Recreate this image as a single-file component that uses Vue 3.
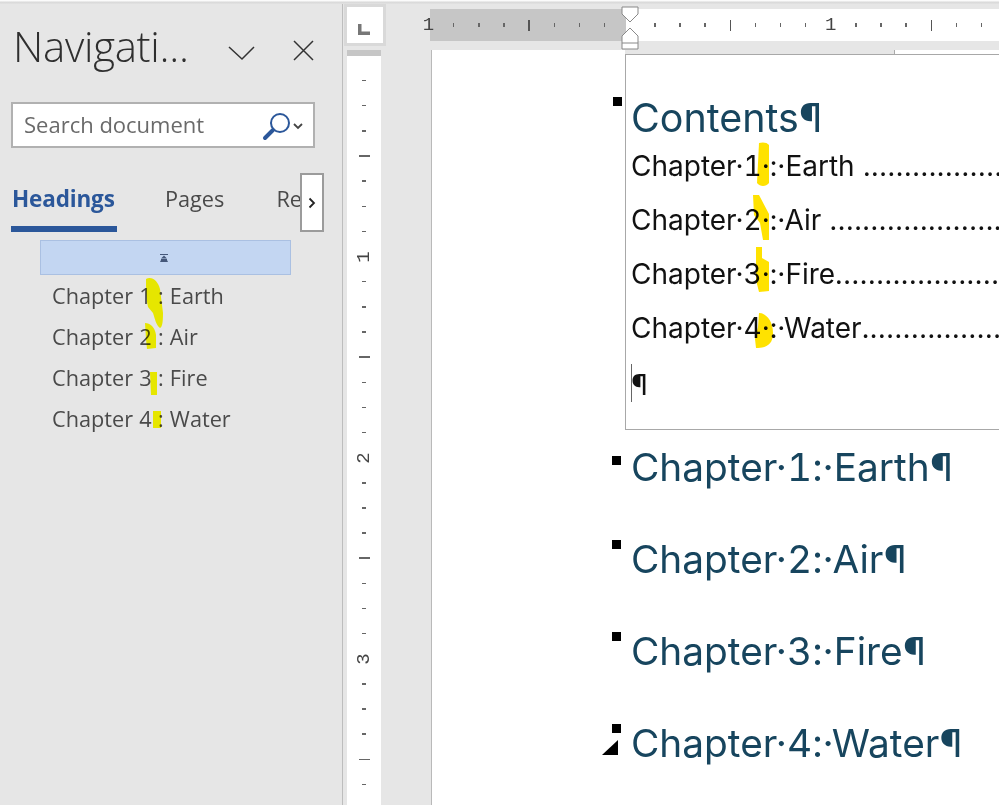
<script setup>
const hTicks = [
  { label: '1', light: true }, { s: 1 }, { s: 1 }, { s: 1 }, { t: 1 }, { s: 1 }, { s: 1 }, { s: 1 }, { gap: 1 },
  { s: 1 }, { s: 1 }, { s: 1 }, { t: 1 }, { s: 1 }, { s: 1 }, { s: 1 }, { label: '1' },
  { s: 1 }, { s: 1 }, { s: 1 }, { t: 1 }, { s: 1 }, { s: 1 }, { s: 1 }
]
const vTicks = []
for (let i = 0; i < 30; i++) {
  if (i % 8 === 7) vTicks.push({ label: String((i + 1) / 8) })
  else if (i % 8 === 3) vTicks.push({ t: 1 })
  else vTicks.push({ s: 1 })
}
const nav = ['Chapter 1 : Earth', 'Chapter 2 : Air', 'Chapter 3 : Fire', 'Chapter 4 : Water']
const toc = [
  { text: 'Chapter·1·:·Earth', lead: ' ' },
  { text: 'Chapter·2·:·Air', lead: ' ' },
  { text: 'Chapter·3·:·Fire', lead: '' },
  { text: 'Chapter·4·:·Water', lead: '' }
]
const heads = ['Chapter·1:·Earth¶', 'Chapter·2:·Air¶', 'Chapter·3:·Fire¶', 'Chapter·4:·Water¶']
</script>

<template>
  <div class="app">
    <div class="topstrip"></div>
    <div class="main">
      <aside class="pane">
        <div class="pane-head">
          <span class="title">Navigati...</span>
          <svg class="chev" width="30" height="18" viewBox="0 0 30 18"><path d="M2 3 L15 15 L27 3" fill="none" stroke="#333" stroke-width="1.5"/></svg>
          <svg class="close" width="24" height="24" viewBox="0 0 24 24"><path d="M2 2 L21 21 M21 2 L2 21" fill="none" stroke="#333" stroke-width="1.5"/></svg>
        </div>
        <div class="search">
          <span class="search-text">Search document</span>
          <svg class="lens" width="30" height="30" viewBox="0 0 30 30">
            <circle cx="18" cy="12" r="9" fill="#fff" stroke="#2b579a" stroke-width="2"/>
            <path d="M11 19 L3 27" stroke="#2b579a" stroke-width="4" stroke-linecap="round"/>
          </svg>
          <svg class="caret" width="10" height="7" viewBox="0 0 10 7"><path d="M1 1 L5 5 L9 1" fill="none" stroke="#444" stroke-width="1.8"/></svg>
        </div>
        <div class="tabs">
          <span class="tab active">Headings</span>
          <span class="tab pages">Pages</span>
          <span class="tab re">Re</span>
          <span class="more">
            <svg width="8" height="12" viewBox="0 0 8 12"><path d="M1.5 1.5 L6 6 L1.5 10.5" fill="none" stroke="#222" stroke-width="1.8"/></svg>
          </span>
        </div>
        <div class="selected">
          <svg width="8" height="8" viewBox="0 0 8 8"><path d="M0 0 H8 V1 H0 Z M4 1.5 L7 4.5 H1 Z M1 5 H7 V6 L8 8 H0 L1 6 Z" fill="#45587a"/></svg>
        </div>
        <ul class="nav-list">
          <li v-for="n in nav" :key="n">{{ n }}</li>
        </ul>
        <svg class="marks" width="342" height="200" viewBox="0 0 342 200">
          <path d="M146 6 C152 3 158 8 160 16 L163 40 C163 50 162 54 160 55 C156 52 155 46 153 40 L148 34 C146 25 146 14 146 6 Z" />
          <path d="M145 50 C150 50 155 54 156 62 L156 75 L147 76 L146 66 Z" />
          <path d="M150 99 H157 V122 H151 Z" />
          <path d="M153 138 H161 V155 H153 Z" />
        </svg>
      </aside>

      <div class="vruler-col">
        <div class="corner"><svg width="12" height="11" viewBox="0 0 12 11"><path d="M0 0 H3.5 V7.5 H12 V11 H0 Z" fill="#777"/></svg></div>
        <div class="vruler">
          <div class="vcap"></div>
          <div class="vscale">
            <span v-for="(t, i) in vTicks" :key="i" class="vcell">
              <i v-if="t.s" class="vs"></i>
              <i v-else-if="t.t" class="vt"></i>
              <b v-else class="vlabel">{{ t.label }}</b>
            </span>
          </div>
        </div>
      </div>

      <div class="work">
        <div class="hruler">
          <div class="hr-gray"></div>
          <div class="hscale">
            <span v-for="(t, i) in hTicks" :key="i" class="hcell">
              <i v-if="t.s" class="hs"></i>
              <i v-else-if="t.t" class="ht"></i>
              <b v-else-if="t.label" class="hlabel">{{ t.label }}</b>
            </span>
          </div>
          <svg class="indent" width="18" height="50" viewBox="0 0 18 50">
            <path d="M1 1 H17 V8 L9 16 L1 8 Z" fill="#fff" stroke="#888"/>
            <path d="M9 22 L17 30 V43 H1 V30 Z M1 37 H17" fill="#fff" stroke="#888"/>
          </svg>
        </div>
        <div class="rule-gap"></div>
        <div class="page">
          <div class="margin"></div>
          <div class="content">
            <div class="tabstrip"><span class="tabstop"></span></div>
            <div class="tocbox">
              <span class="anchor a-contents"></span>
              <h1 class="heading contents">Contents¶</h1>
              <div v-for="t in toc" :key="t.text" class="tocline">
                <span class="toctext">{{ t.text }}</span><span class="leader">{{ t.lead }}............................................................</span>
              </div>
              <div class="pilcrow"><span class="cursor"></span>¶</div>
              <svg class="marks2" width="160" height="300" viewBox="0 0 160 300">
                <path d="M133 88 C136 87 141 87 143 90 L143 128 C140 132 134 132 131 128 Z" />
                <path d="M127 140 L133 140 L143 159 L143 185 L137 185 L134 168 L128 160 Z" />
                <path d="M130 192 L136 192 L136 203 L143 207 V236 L133 237 L130 225 Z" />
                <path d="M133 258 C140 258 147 266 147 278 C147 290 140 293 130 293 L129 284 L132 272 Z" />
              </svg>
            </div>
            <div class="heads">
              <div v-for="(h, i) in heads" :key="h" class="headrow">
                <span class="anchor"></span>
                <svg v-if="i === 3" class="tri" width="18" height="16" viewBox="0 0 18 16"><path d="M0 16 L16 1 V16 Z" fill="#000"/></svg>
                <h2 class="heading">{{ h }}</h2>
              </div>
            </div>
          </div>
        </div>
      </div>
    </div>
  </div>
</template>

<style>
html, body { margin: 0; padding: 0; background: #e6e6e6; }
</style>

<style scoped>
* { box-sizing: border-box; }
.app { width: 999px; height: 805px; overflow: hidden; background: #e6e6e6; display: flex; flex-direction: column; }
.topstrip { height: 4px; flex: none; background: linear-gradient(#fbfbfb 0, #fbfbfb 25%, #d8d8d8 50%, #e2e2e2 100%); }
.main { flex: 1; display: flex; min-height: 0; }

.pane { width: 343px; flex: none; position: relative; border-right: 1px solid #bdbdbd; font-family: "Open Sans", "Noto Sans", sans-serif; color: #444; }
.pane-head { display: flex; align-items: center; height: 82px; padding: 0 0 0 13px; }
.title { font-size: 42px; font-weight: 300; color: #2f2f2f; width: 214px; white-space: nowrap; letter-spacing: -0.3px; }
.chev { margin-right: 35px; margin-top: 15px; }
.close { margin-top: 11px; }
.search { margin: 16px 0 0 11px; width: 304px; height: 46px; border: 2px solid #b1b1b1; background: #fff; display: flex; align-items: center; padding-left: 11px; }
.search-text { font-size: 22px; color: #6a6a6a; width: 238px; white-space: nowrap; padding-bottom: 2px; }
.lens { margin-top: 1px; }
.caret { margin-left: 1px; margin-top: 2px; }
.tabs { position: relative; height: 59px; margin-top: 25px; display: flex; align-items: flex-start; font-size: 22.5px; white-space: nowrap; }
.tab { display: block; line-height: 30px; margin-top: 11px; }
.active { margin-left: 11px; width: 106px; height: 48px; padding-left: 1px; font-weight: 700; color: #2b579a; border-bottom: 6px solid #2b579a; font-size: 22.5px; letter-spacing: -0.15px; }
.pages { margin-left: 48px; color: #4a4a4a; font-size: 21.7px; }
.re { margin-left: 52px; color: #4a4a4a; font-size: 21.7px; }
.more { position: absolute; left: 300px; top: 0; width: 24px; height: 59px; border: 2px solid #9b9b9b; background: #fff; display: flex; align-items: center; justify-content: center; }
.selected { margin: 8px 0 0 40px; width: 251px; height: 35px; background: #c3d6f2; border: 1.5px solid #aac0e2; display: flex; align-items: center; justify-content: center; }
.selected svg { margin-left: -4px; }
.nav-list { list-style: none; margin: 0; padding: 0 0 0 52px; font-size: 21.7px; word-spacing: 0.6px; color: #4a4a4a; }
.nav-list li { height: 41px; line-height: 41px; white-space: nowrap; }
.marks { position: absolute; left: 0; top: 269px; pointer-events: none; mix-blend-mode: multiply; }
.marks path { fill: #ffff00; }

.vruler-col { width: 88px; flex: none; position: relative; padding-left: 4px; }
.corner { width: 42px; height: 42px; margin-left: -3px; padding: 9px 2px 0 0; border: 3px solid #d9d9d9; background: #fff; display: flex; align-items: center; justify-content: center; }
.vruler { width: 34px; margin-top: 4px; height: 800px; background: #fff; overflow: hidden; }
.vcap { height: 6px; background: #c6c6c6; }
.vscale { display: flex; flex-direction: column; padding-top: 12px; }
.vcell { height: 25.15px; flex: none; display: flex; align-items: center; justify-content: center; }
.vs { width: 4px; height: 1.5px; background: #666; display: block; }
.vt { width: 11px; height: 1.5px; background: #666; display: block; }
.vlabel { font: 400 19px "Liberation Mono", monospace; color: #444; transform: rotate(-90deg); display: block; }

.work { flex: 1; min-width: 0; display: flex; flex-direction: column; }
.hruler { position: relative; margin-top: 5px; height: 32px; background: #fff; display: flex; }
.hr-gray { position: absolute; left: -1px; top: 0; width: 196px; height: 32px; background: #c6c6c6; }
.hscale { position: relative; display: flex; margin-left: -15px; }
.hcell { width: 25.15px; flex: none; display: flex; align-items: center; justify-content: center; }
.hs { width: 1.5px; height: 4px; background: #666; display: block; }
.ht { width: 1.5px; height: 11px; background: #555; display: block; }
.hlabel { font: 400 19px "Liberation Mono", monospace; color: #444; }
.indent { position: absolute; left: 190px; top: -3px; overflow: visible; }
.rule-gap { height: 9px; background: #e6e6e6; }
.page { flex: 1; background: #fff; display: flex; min-height: 0; border-left: 1px solid #b9b9b9; }
.margin { width: 193px; flex: none; }
.content { flex: 1; min-width: 0; font-family: Inter, "Liberation Sans", sans-serif; font-feature-settings: "calt" 0, "tnum" 1; }
.tabstrip { height: 4px; }
.tabstop { display: block; width: 270px; height: 4px; background: #e6e6e6; border-right: 1px solid #aaa; }
.tocbox { position: relative; height: 376px; border: 1.5px solid #a8a8a8; border-right: 0; padding: 40px 0 0 5px; }
.anchor { position: absolute; width: 9px; height: 9px; background: #000; left: -13px; top: 4px; }
.a-contents { top: 42px; }
.heading { margin: 0; font-weight: 400; font-size: 38.8px; color: #17455e; line-height: 46px; white-space: nowrap; }
.contents { margin-bottom: -2px; font-size: 39.4px; }
.tocline { height: 54px; line-height: 54px; font-size: 28px; color: #111; white-space: nowrap; overflow: hidden; }
.leader { letter-spacing: 0.7px; }
.pilcrow { position: relative; margin-top: 3px; font-size: 28px; color: #111; line-height: 54px; }
.cursor { position: absolute; left: 0; top: 6px; width: 1px; height: 38px; background: #666; }
.marks2 { position: absolute; left: 0; top: 0; mix-blend-mode: multiply; pointer-events: none; }
.marks2 path { fill: #ffe200; }
.heads { padding-top: 14px; }
.headrow { position: relative; height: 92px; padding-left: 6px; }
.headrow:first-child .anchor { top: 12px; }
.tri { position: absolute; left: -23px; top: 19px; }
</style>
